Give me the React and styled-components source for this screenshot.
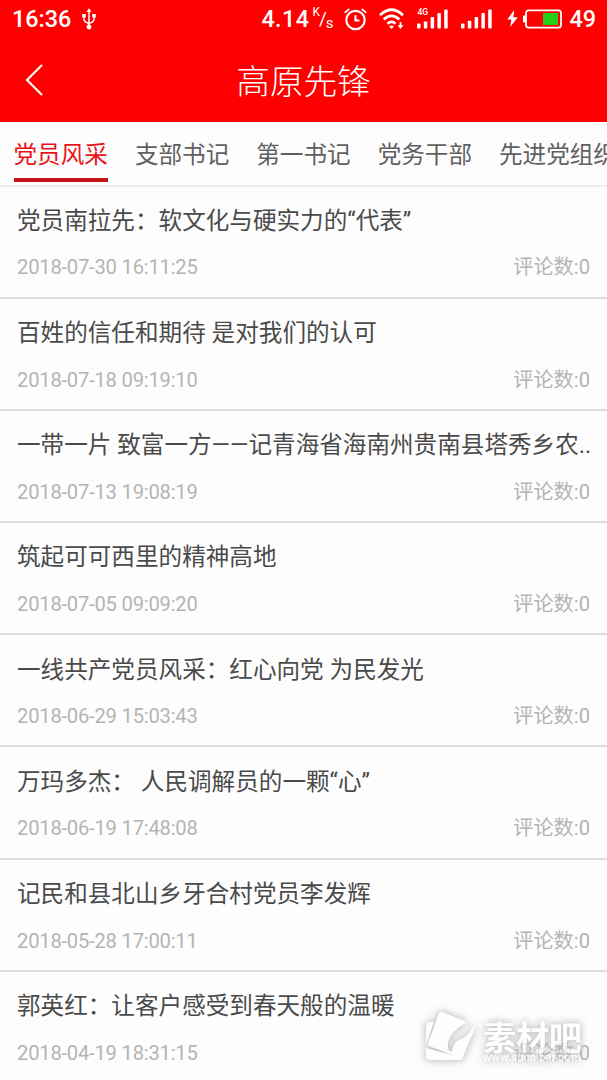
import React from 'react';
import styled, { createGlobalStyle } from 'styled-components';

const tabs = ['党员风采', '支部书记', '第一书记', '党务干部', '先进党组织'];

const articles = [
  { title: '党员南拉先：软文化与硬实力的“代表”', date: '2018-07-30 16:11:25' },
  { title: '百姓的信任和期待 是对我们的认可', date: '2018-07-18 09:19:10' },
  { title: '一带一片 致富一方——记青海省海南州贵南县塔秀乡农..', date: '2018-07-13 19:08:19' },
  { title: '筑起可可西里的精神高地', date: '2018-07-05 09:09:20' },
  { title: '一线共产党员风采：红心向党 为民发光', date: '2018-06-29 15:03:43' },
  { title: '万玛多杰： 人民调解员的一颗“心”', date: '2018-06-19 17:48:08' },
  { title: '记民和县北山乡牙合村党员李发辉', date: '2018-05-28 17:00:11' },
  { title: '郭英红：让客户感受到春天般的温暖', date: '2018-04-19 18:31:15' },
];

function UsbIcon() {
  return (
    <svg width="14" height="22" viewBox="0 0 14 22" fill="none" stroke="#fff" strokeWidth="1.5">
      <path d="M7 3v15M2 8v3.2q0 2.8 5 4.2M12 8v3.2q0 2.8-5 4.2" />
      <path d="M7 .3 9.5 4h-5zM.2 6h3.6v3.4H.2zM10.2 6h3.6v3.4h-3.6z" fill="#fff" stroke="none" />
      <circle cx="7" cy="19" r="2.4" fill="#fff" stroke="none" />
    </svg>
  );
}

function AlarmIcon() {
  return (
    <svg width="23" height="23" viewBox="0 0 23 23" fill="none" stroke="#fff" strokeWidth="2.2" strokeLinecap="round">
      <circle cx="11.5" cy="12" r="9.2" />
      <path d="M11.5 7.2v5.3h4" strokeLinecap="butt" />
      <path d="M1.2 4.3 4.8 1.3M21.8 4.3 18.2 1.3" strokeWidth="1.6" />
    </svg>
  );
}

function WifiIcon() {
  return (
    <svg width="26" height="22" viewBox="0 0 26 22" fill="none" stroke="#fff" strokeWidth="2.7">
      <path d="M1 7.2Q12.5-3.7 24 7.2M4.7 11.6Q12.5 4.2 20.3 11.6M8.5 15.7Q12.5 12.2 16.5 15.7" />
      <path d="m12.5 21-2.4-2.6q2.4-1.8 4.8 0zM18.6 17.2h5.8L21.5 21z" fill="#fff" stroke="none" />
      <path d="M21.5 14v4" strokeWidth="1.8" />
    </svg>
  );
}

function SignalIcon({ network }) {
  return (
    <Signal>
      {network && <Network>{network}</Network>}
      <svg width="32" height="20" viewBox="0 0 32 20" fill="#fff">
        <rect x="0" y="14.5" width="3.5" height="5" rx=".8" />
        <rect x="6.8" y={network ? 12.5 : 11.8} width="3.5" height={network ? 7 : 7.7} rx=".8" />
        <rect x="13.6" y="8" width="3.5" height="11.5" rx=".8" />
        <rect x="20.4" y="4" width="3.5" height="15.5" rx=".8" />
        <rect x="27.2" y=".4" width="3.5" height="19.1" rx=".8" />
      </svg>
    </Signal>
  );
}

function BatteryIcon() {
  return (
    <svg width="56" height="20" viewBox="0 0 56 20">
      <path d="M7.2 1 .4 10.4h4L3.2 18 10.8 8.2H6.4z" fill="#fff" />
      <rect x="16" y="6.5" width="3.5" height="7" rx="1" fill="#fff" />
      <rect x="19" y="1.3" width="35" height="17.4" rx="2.6" fill="none" stroke="#fff" strokeWidth="1.8" />
      <rect x="36" y="4" width="15" height="12" fill="#24cf16" />
    </svg>
  );
}

function SiteMark() {
  return (
    <Mark>
      <svg width="52" height="50" viewBox="0 0 52 50" fill="#fff">
        <path d="M5 11Q1 11 1 15v19l8-23zM1 37v8q0 4 4 4h29q3 0 4-2z" />
        <path d="M17 1 42 11q-16 9-19 20-1 5 1 9l3 .5Q28 34 32 30q9-4 12-8 3-4 5-7 2-3 1 2L38 46q-1 2-3 1L4 35q-2-1-1-3L14 2q1-2 3-1z" />
      </svg>
      <MarkText>
        <MarkName>素材吧</MarkName>
        <MarkUrl>www.sucaibar.com</MarkUrl>
      </MarkText>
    </Mark>
  );
}

function App() {
  return (
    <Page>
      <GlobalStyle />
      <StatusBar>
        <Clock>16:36</Clock>
        <UsbIcon />
        <Spacer />
        <Speed>4.14</Speed>
        <Unit><sup>K</sup>/<sub>s</sub></Unit>
        <StatusIcons>
          <AlarmIcon />
          <WifiIcon />
          <SignalIcon network="4G" />
          <SignalIcon />
          <BatteryIcon />
        </StatusIcons>
        <Percent>49</Percent>
      </StatusBar>
      <Header>
        <BackButton aria-label="返回">
          <svg width="18" height="32" viewBox="0 0 18 32" fill="none" stroke="#fff" strokeWidth="2.1">
            <path d="M17 1 2 16l15 15" />
          </svg>
        </BackButton>
        <HeaderTitle>高原先锋</HeaderTitle>
      </Header>
      <TabBar>
        {tabs.map((tab, i) => (
          <Tab key={tab} $active={i === 0}>{tab}</Tab>
        ))}
      </TabBar>
      <List>
        {articles.map((item) => (
          <Row key={item.date}>
            <Title>{item.title}</Title>
            <Meta>
              <PostDate>{item.date}</PostDate>
              <span>评论数:0</span>
            </Meta>
          </Row>
        ))}
      </List>
      <SiteMark />
    </Page>
  );
}

const GlobalStyle = createGlobalStyle`
  body {
    margin: 0;
    background: #fff;
  }
  * {
    box-sizing: border-box;
  }
`

const Page = styled.div`
  position: relative;
  width: 607px;
  height: 1080px;
  overflow: hidden;
  background: #fdfdfd;
  font-family: Roboto, "Noto Sans CJK SC", sans-serif;
  font-weight: 400;
`

const StatusBar = styled.div`
  display: flex;
  align-items: center;
  height: 38px;
  padding: 0 11px 0 12px;
  background: #ff0000;
  color: #fff;
  font-size: 23.4px;
  font-weight: 500;
  line-height: 38px;
`

const Clock = styled.span`
  width: 70px;
`

const Spacer = styled.div`
  flex: 1;
`

const Speed = styled.span`
  letter-spacing: 0.4px;
`

const Unit = styled.span`
  display: flex;
  align-items: center;
  width: 21px;
  height: 22px;
  margin-left: 3px;
  font-size: 19px;
  font-weight: 400;
  line-height: 20px;

  sup, sub {
    font-size: 12px;
    line-height: 13px;
  }
  sup {
    align-self: flex-start;
    margin-top: -2px;
    margin-right: -1px;
  }
  sub {
    align-self: flex-end;
    margin-left: -1px;
    font-size: 15px;
  }
`

const StatusIcons = styled.div`
  display: flex;
  align-items: center;
  gap: 12px;
  margin-left: 11px;

  svg {
    flex: none;
  }
`

const Signal = styled.div`
  position: relative;
  display: flex;

  & + & {
    margin-right: 2px;
  }
`

const Network = styled.span`
  position: absolute;
  top: -1px;
  left: 0;
  font-size: 8.5px;
  line-height: 8px;
`

const Percent = styled.span`
  margin-left: 6px;
`

const Header = styled.header`
  display: grid;
  grid-template-columns: 60px 1fr 60px;
  align-items: center;
  height: 83.5px;
  background: #ff0000;
  color: #fff;
`

const BackButton = styled.button`
  display: flex;
  padding: 0 0 0 25px;
  border: 0;
  background: none;
`

const HeaderTitle = styled.h1`
  margin: 0;
  padding-top: 6px;
  font-size: 33.6px;
  font-weight: 300;
  line-height: 40px;
  text-align: center;
`

const TabBar = styled.nav`
  display: flex;
  gap: 27px;
  height: 65px;
  padding-left: 13.5px;
  border-bottom: 2px solid #ececec;
`

const Tab = styled.div`
  flex: none;
  height: 60px;
  border-bottom: 4px solid ${(props) => (props.$active ? '#c5161a' : 'transparent')};
  color: ${(props) => (props.$active ? '#e8141a' : '#606060')};
  font-size: 23.6px;
  line-height: 67px;
  white-space: nowrap;
`

const List = styled.div`
  display: flex;
  flex-direction: column;
`

const Row = styled.div`
  height: 112.2px;
  padding: 16.3px 17px 0;
  border-bottom: 2px solid #dedede;
`

const Title = styled.div`
  color: #4a4a4a;
  font-size: 23.6px;
  line-height: 36px;
  white-space: nowrap;
`

const Meta = styled.div`
  display: flex;
  justify-content: space-between;
  margin-top: 13.7px;
  color: #b4b4b4;
  font-size: 20.2px;
  line-height: 30px;
`

const PostDate = styled.span`
  letter-spacing: -0.22px;
`

const Mark = styled.div`
  position: absolute;
  right: 22px;
  bottom: 17px;
  display: flex;
  gap: 6px;
  width: 160px;
  height: 52px;
  color: #fff;
  opacity: 0.7;
  filter: drop-shadow(0 0 3px #aaa) drop-shadow(0 0 4px #ccc);
`

const MarkText = styled.div`
  display: flex;
  flex-direction: column;
  padding-top: 9px;
`

const MarkName = styled.span`
  font-family: "Noto Sans CJK SC", sans-serif;
  font-size: 33px;
  font-weight: 700;
  line-height: 32px;
  white-space: nowrap;
`

const MarkUrl = styled.span`
  font-size: 11.6px;
  font-weight: 500;
  line-height: 10px;
`

export default App;
